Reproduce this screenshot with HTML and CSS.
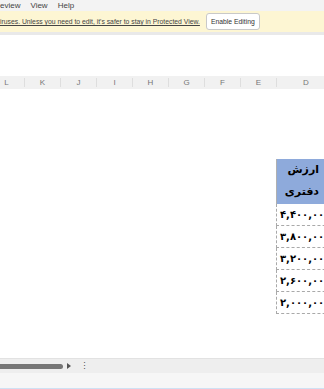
FILE: index.html
```html
<!DOCTYPE html>
<html lang="en">
<head>
  <meta charset="UTF-8" />
  <title>Sheet</title>
  <link rel="stylesheet" href="styles.css">
</head>
<body>
  <div class="menu">
    <span>eview</span>
    <span>View</span>
    <span>Help</span>
  </div>

  <div class="protected">
    <span class="msg">iruses. Unless you need to edit, it's safer to stay in Protected View.</span>
    <button class="enable">Enable Editing</button>
  </div>

  <div class="formula"></div>

  <div class="cols">
    <div class="col">L</div>
    <div class="col">K</div>
    <div class="col">J</div>
    <div class="col">I</div>
    <div class="col">H</div>
    <div class="col">G</div>
    <div class="col">F</div>
    <div class="col">E</div>
    <div class="col wide">D</div>
  </div>

  <div class="grid">
    <div class="table">
      <div class="head">
        <div>ارزش</div>
        <div>دفتری</div>
      </div>
      <div class="cell">۴,۴۰۰,۰۰۰</div>
      <div class="cell">۳,۸۰۰,۰۰۰</div>
      <div class="cell">۳,۲۰۰,۰۰۰</div>
      <div class="cell">۲,۶۰۰,۰۰۰</div>
      <div class="cell">۲,۰۰۰,۰۰۰</div>
    </div>
  </div>

  <div class="tabs">
    <div class="scroll"></div>
    <span class="arrow"></span>
    <span class="dots">⋮</span>
  </div>

  <div class="status"></div>
</body>
</html>
```

FILE: styles.css
```css
* {
  box-sizing: border-box;
}

html, body {
  height: 100%;
}

body {
  margin: 0;
  font-family: 'Liberation Sans', Arial, sans-serif;
  color: #333;
  background: #fff;
  display: flex;
  flex-direction: column;
  overflow: hidden;
}

.menu {
  height: 11px;
  background: #f3f3f3;
  display: flex;
  gap: 10px;
  align-items: center;
  font-size: 8px;
  color: #444;
  line-height: 1;
}

.protected {
  height: 24px;
  background: #fdf6d3;
  border-bottom: 3px solid #e9e9e9;
  display: flex;
  align-items: center;
  font-size: 6.8px;
  white-space: nowrap;
  overflow: hidden;
}

.msg {
  text-decoration: underline;
  color: #444;
}

.enable {
  margin-left: 6px;
  height: 17px;
  padding: 0 4px;
  font: 6.8px 'Liberation Sans', Arial, sans-serif;
  color: #333;
  background: #fff;
  border: 1px solid #c9c9c9;
  border-radius: 3px;
}

.formula {
  height: 41px;
  background: #fff;
}

.cols {
  height: 13px;
  background: #f1f1f1;
  display: flex;
  font-size: 8px;
  align-items: center;
  margin-left: -11px;
}

.col {
  width: 36px;
  flex: none;
  text-align: center;
  color: #777;
  border-right: 1px solid #dedede;
  line-height: 9px;
}

.col.wide {
  width: 58px;
  border-right: none;
}

.grid {
  flex: 1;
  display: flex;
  padding-top: 70px;
  padding-left: 276px;
}

.table {
  width: 60px;
  flex: none;
  font-family: 'DejaVu Sans', sans-serif;
  font-weight: bold;
  color: #000;
  align-self: flex-start;
}

.head {
  height: 45px;
  background: #8eaadb;
  direction: rtl;
  text-align: right;
  font-size: 11px;
  line-height: 22px;
  padding-right: 17px;
  border-left: 1px solid #b0b0b0;
}

.cell {
  height: 22px;
  border: 1px dashed #a9a9a9;
  border-top: none;
  border-right: none;
  font-size: 10px;
  line-height: 21px;
  padding-left: 3px;
  direction: ltr;
  white-space: nowrap;
  overflow: hidden;
  letter-spacing: 0.5px;
}

.tabs {
  height: 15px;
  background: #eeeeee;
  border-top: 1px solid #e2e2e2;
  display: flex;
  align-items: center;
}

.scroll {
  width: 63px;
  height: 5px;
  background: #767676;
  border-radius: 0 3px 3px 0;
}

.arrow {
  width: 0;
  height: 0;
  margin-left: 4px;
  border-top: 3px solid transparent;
  border-bottom: 3px solid transparent;
  border-left: 4px solid #555;
}

.dots {
  margin-left: 9px;
  font-size: 9px;
  color: #555;
}

.status {
  height: 16px;
  background: #f6f6f6;
  border-bottom: 1px solid #cfe0f3;
}
```
